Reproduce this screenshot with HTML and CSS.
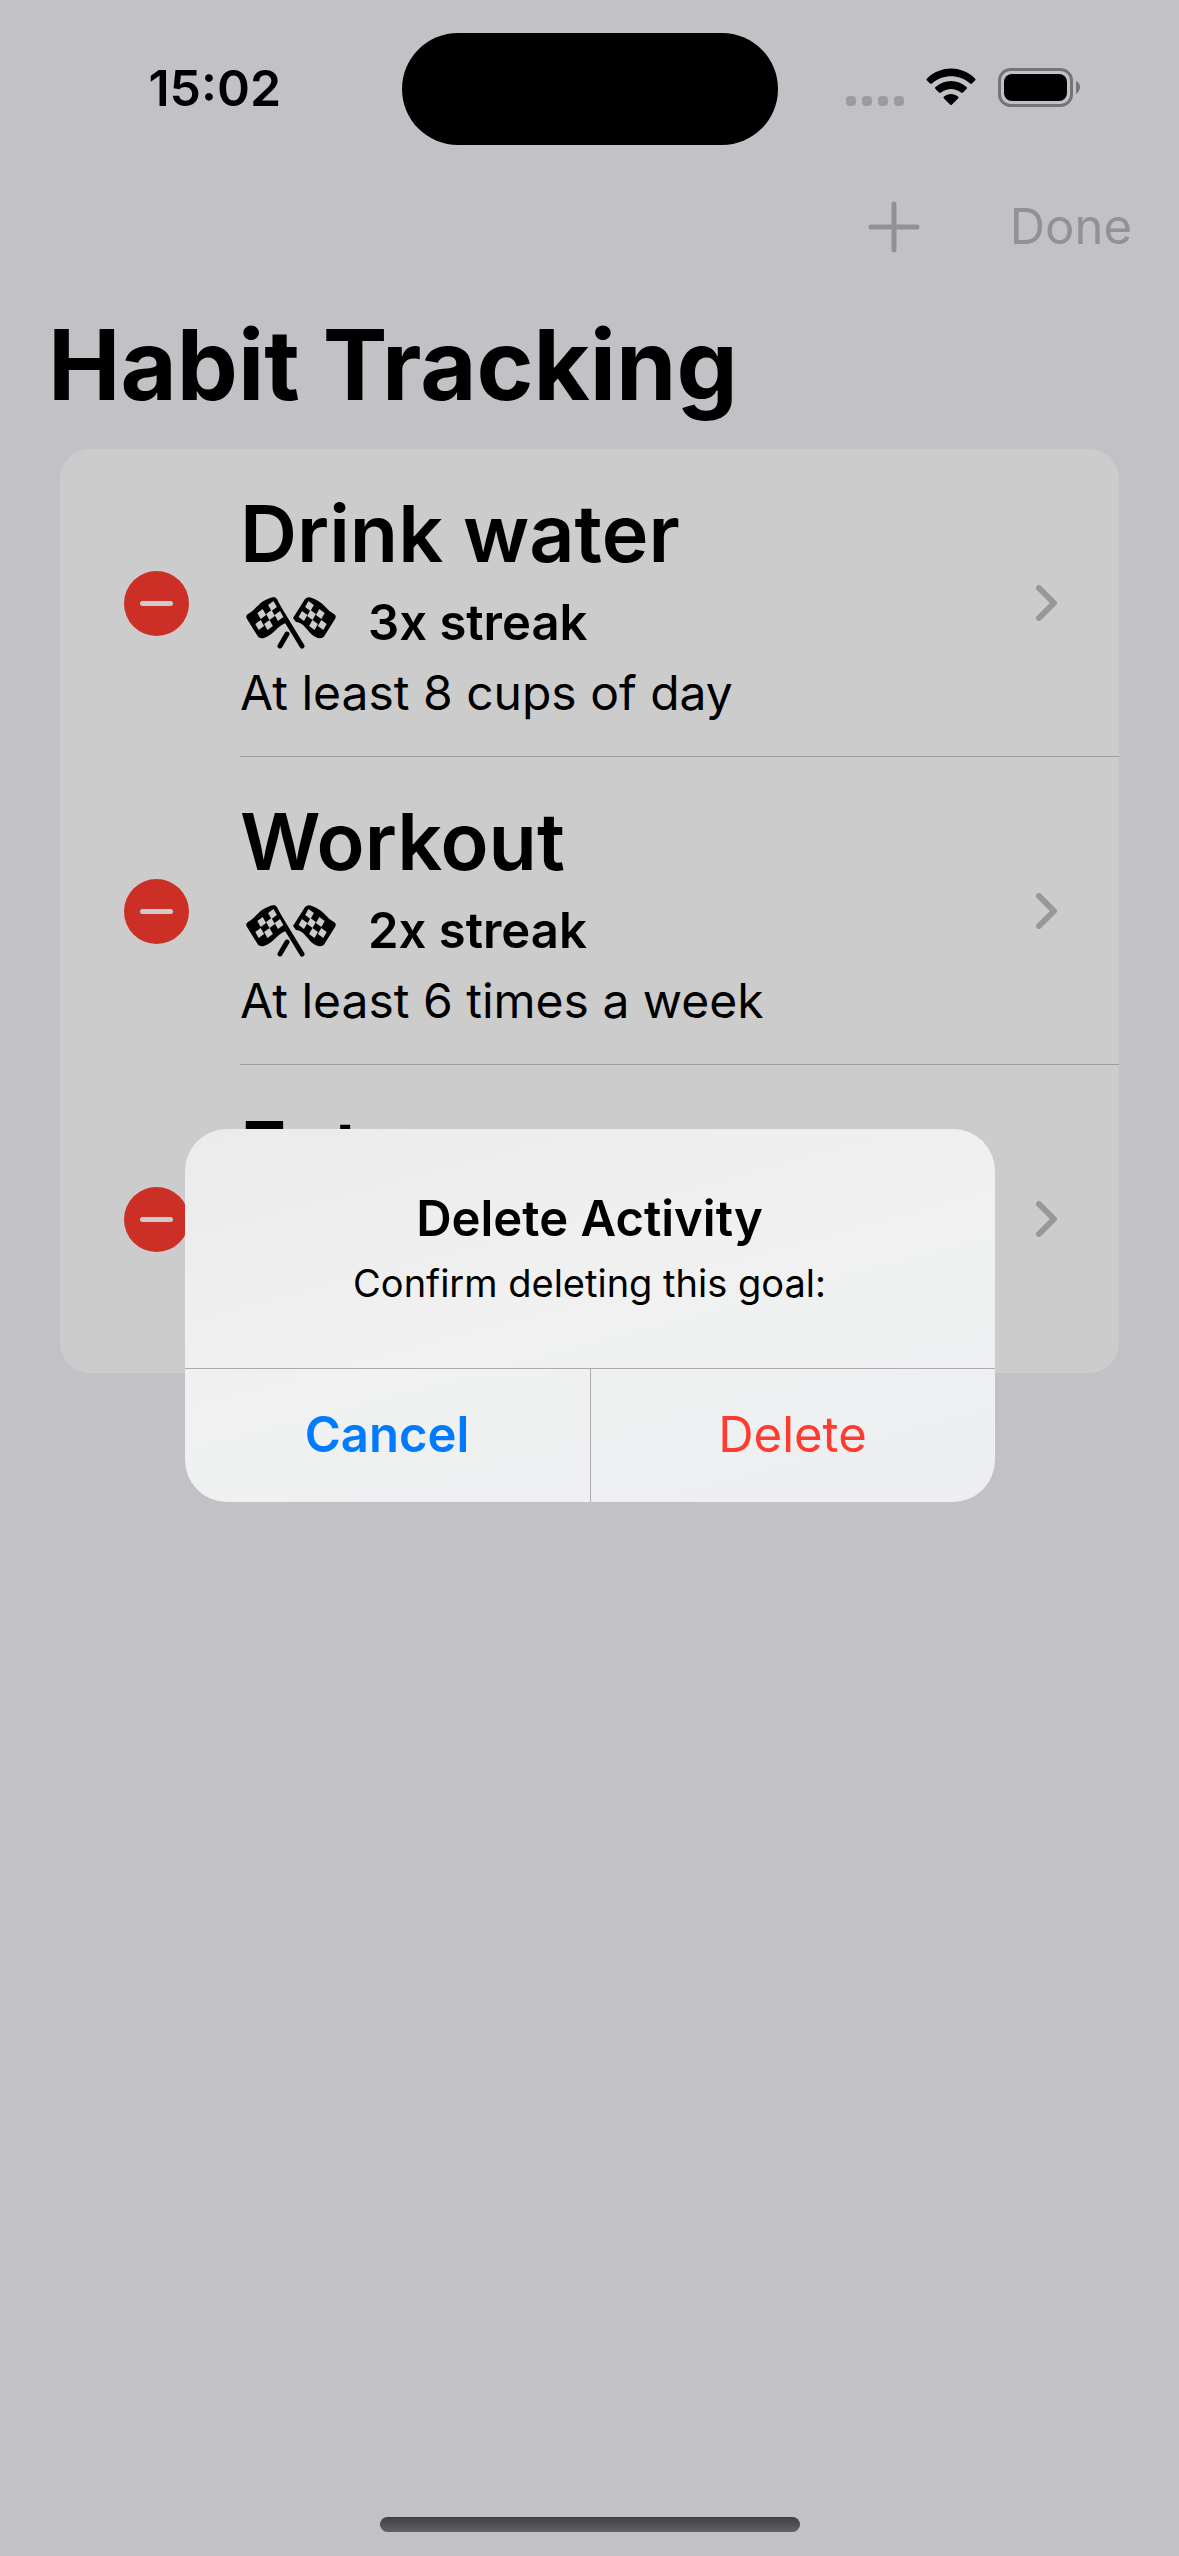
FILE: index.html
```html
<!DOCTYPE html>
<html lang="en">
<head>
<meta charset="utf-8">
<meta name="viewport" content="width=device-width, initial-scale=1">
<title>Habit Tracking</title>
<link rel="stylesheet" href="styles.css">
</head>
<body>
<svg class="sprite" aria-hidden="true">
  <symbol id="flags" viewBox="0 0 90 52">
    <path fill="none" stroke="currentColor" stroke-width="5" stroke-linecap="round" d="M28 3 56 49M41 37 34 49"/>
    <path fill="currentColor" d="M31 2Q28-1 24 1C12 5 10 13 2 17Q-1 19 1 22L11 38Q13 42 18 41C28 38 30 29 42 25Z"/>
    <path fill="currentColor" d="M59 2Q62-1 66 1C78 5 80 13 88 17Q91 19 89 22L79 38Q77 42 72 41C62 38 60 26 50 25L47 21Z"/>
    <g class="checks">
      <path d="M22.100 8l5.400-4 3.400 6-5.400 4zM11.300 16l5.400-4 3.400 6-5.400 4zM20.100 17l5.400-4 3.400 6-5.400 4zM28.600 18l5.400-4 3.400 6-5.400 4zM9.300 27l5.400-4 3.400 6-5.400 4zM18.100 27l5.400-4 3.400 6-5.400 4z"/>
      <path d="M67.900 8l-5.400-4-3.400 6 5.400 4zM78.700 16l-5.400-4-3.400 6 5.400 4zM69.900 17l-5.400-4-3.400 6 5.400 4zM61.400 18l-5.400-4-3.400 6 5.400 4zM80.700 27l-5.400-4-3.400 6 5.400 4zM71.900 27l-5.400-4-3.400 6 5.400 4z"/>
    </g>
  </symbol>
  <symbol id="chevron" viewBox="0 0 22 36">
    <path fill="none" stroke="currentColor" stroke-width="6" stroke-linecap="round" stroke-linejoin="round" d="M3 3 18 18 3 33"/>
  </symbol>
</svg>
<div class="app">
  <header class="status">
    <time class="clock">15:02</time>
    <div class="island"></div>
    <div class="indicators">
      <svg width="58" height="38" viewBox="0 0 58 38" fill="#9b9a9d" aria-label="No signal"><rect y="28" width="10" height="10" rx="4"/><rect x="16" y="28" width="10" height="10" rx="4"/><rect x="32" y="28" width="10" height="10" rx="4"/><rect x="48" y="28" width="10" height="10" rx="4"/></svg>
      <svg width="50" height="38" viewBox="0 0 50 38" aria-label="Wi-Fi"><path d="M1 10.500Q0 11.500 1 12.500L4 15.500Q5 16.200 6 15.400C17 6 33 6 44 15.400Q45 16.200 46 15.500L49 12.500Q50 11.500 49 10.500C35-2.700 15-2.700 1 10.500ZM9.500 19Q8.500 20 9.500 21L13 24.600Q14 25.500 15 24.600C21 19.700 29 19.700 35 24.600Q36 25.500 37 24.600L40.500 21Q41.500 20 40.500 19C31.500 11 18.500 11 9.500 19ZM18 28.500Q17 29.400 18 30.400L24 36.500Q25 37.500 26 36.500L32 30.400Q33 29.400 32 28.500C28 25 22 25 18 28.500Z"/></svg>
      <svg width="82" height="39" viewBox="0 0 82 39" aria-label="Battery full"><rect x="1.500" y="1.500" width="72" height="36" rx="11" fill="none" stroke="#747377" stroke-width="3"/><rect x="6" y="6" width="63" height="27" rx="8"/><path fill="#747377" d="M78 13Q82 15 82 19T78 26Z"/></svg>
    </div>
  </header>
  <nav class="toolbar">
    <button class="tool" aria-label="Add"><svg width="52" height="52" viewBox="0 0 52 52"><path fill="none" stroke="currentColor" stroke-width="5" stroke-linecap="round" d="M26 3V49M3 26H49"/></svg></button>
    <button class="tool">Done</button>
  </nav>
  <main>
    <h1>Habit Tracking</h1>
    <ul class="habits">
      <li class="habit">
        <button class="remove" aria-label="Remove Drink water"></button>
        <div class="body">
          <div class="text">
            <h2>Drink water</h2>
            <p class="streak"><svg class="flags"><use href="#flags"/></svg>3x streak</p>
            <p>At least 8 cups of day</p>
          </div>
          <svg class="chevron"><use href="#chevron"/></svg>
        </div>
      </li>
      <li class="habit">
        <button class="remove" aria-label="Remove Workout"></button>
        <div class="body">
          <div class="text">
            <h2>Workout</h2>
            <p class="streak"><svg class="flags"><use href="#flags"/></svg>2x streak</p>
            <p>At least 6 times a week</p>
          </div>
          <svg class="chevron"><use href="#chevron"/></svg>
        </div>
      </li>
      <li class="habit">
        <button class="remove" aria-label="Remove Eat"></button>
        <div class="body">
          <div class="text">
            <h2>Eat</h2>
          </div>
          <svg class="chevron"><use href="#chevron"/></svg>
        </div>
      </li>
    </ul>
  </main>
  <div class="home"></div>
  <div class="overlay">
    <section class="alert" role="alertdialog" aria-labelledby="alert-title" aria-describedby="alert-text">
      <div class="message">
        <h3 id="alert-title">Delete Activity</h3>
        <p id="alert-text">Confirm deleting this goal:</p>
      </div>
      <div class="actions">
        <button class="cancel">Cancel</button>
        <button class="delete">Delete</button>
      </div>
    </section>
  </div>
</div>
</body>
</html>
```
FILE: styles.css
```css
* {
  box-sizing: border-box;
  margin: 0;
  padding: 0;
}

body {
  background: #c2c1c6;
  color: #000;
  font: 49px/66px Inter, "Liberation Sans", sans-serif;
}

button {
  border: 0;
  background: none;
  color: inherit;
  font: inherit;
}

svg {
  display: block;
  flex: none;
}

.sprite {
  position: absolute;
  width: 0;
  height: 0;
}

.app {
  position: relative;
  display: flex;
  flex-direction: column;
  min-height: 100vh;
}

.status {
  display: grid;
  grid-template-columns: 1fr auto 1fr;
  align-items: center;
  padding-top: 33px;
}

.clock {
  padding: 0 0 2px 28px;
  text-align: center;
  font-size: 50px;
  font-weight: 600;
}

.island {
  width: 376px;
  height: 112px;
  border-radius: 56px;
  background: #000;
}

.indicators {
  display: flex;
  justify-content: flex-end;
  gap: 22px;
  padding: 0 99px 3px 0;
}

.toolbar {
  display: flex;
  justify-content: flex-end;
  align-items: center;
  gap: 90px;
  height: 132px;
  margin-top: 16px;
  padding-right: 47px;
  color: #929195;
}

main {
  flex: 1;
}

h1 {
  padding: 0 48px;
  font-size: 97px;
  line-height: 144px;
  font-weight: 700;
}

.habits {
  margin: 12px 60px 0;
  border-radius: 30px;
  background: #ccc;
  list-style: none;
}

.habit {
  display: flex;
  align-items: center;
  height: 308px;
  padding-left: 64px;
}

.remove {
  display: grid;
  place-items: center;
  flex: none;
  width: 65px;
  height: 65px;
  border-radius: 50%;
  background: #cc2f26;
}

.remove::before {
  content: "";
  width: 33px;
  height: 5px;
  border-radius: 3px;
  background: #ccc;
}

.body {
  display: flex;
  flex: 1;
  align-items: center;
  justify-content: space-between;
  align-self: stretch;
  margin-left: 51px;
  padding-right: 61px;
  border-bottom: 1px solid #9e9ea0;
}

.habit:last-child .body {
  border-bottom: 0;
}

.text {
  align-self: flex-start;
  padding-top: 34px;
}

h2 {
  margin-bottom: 5px;
  font-size: 79px;
  line-height: 100px;
  font-weight: 600;
}

.text p {
  font-size: 48px;
  line-height: 70px;
}

.text .streak {
  display: flex;
  align-items: center;
  gap: 32px;
  padding-left: 6px;
  font-size: 49px;
  font-weight: 600;
}

.flags {
  width: 90px;
  height: 52px;
}

.checks {
  fill: #ccc;
}

.chevron {
  width: 22px;
  height: 36px;
  color: #98989a;
}

.home {
  align-self: center;
  width: 420px;
  height: 15px;
  margin-bottom: 24px;
  border-radius: 8px;
  background: linear-gradient(#404041, #626264);
}

.overlay {
  position: absolute;
  inset: 74px 0 0;
  display: grid;
  place-items: center;
}

.alert {
  width: 810px;
  overflow: hidden;
  border-radius: 42px;
  background: linear-gradient(165deg, #ebebeb, #f0f1f0 50%, #edeef1);
  text-align: center;
}

.message {
  padding: 57px 48px 54px;
}

h3 {
  font-size: 49px;
  line-height: 66px;
  font-weight: 600;
}

.message p {
  font-size: 38px;
  line-height: 62px;
}

.actions {
  display: grid;
  grid-template-columns: 1fr 1fr;
  height: 134px;
  border-top: 1px solid #acacae;
}

.cancel {
  color: #007aff;
  font-weight: 600;
}

.delete {
  border-left: 1px solid #acacae;
  color: #ff3b30;
}
```
